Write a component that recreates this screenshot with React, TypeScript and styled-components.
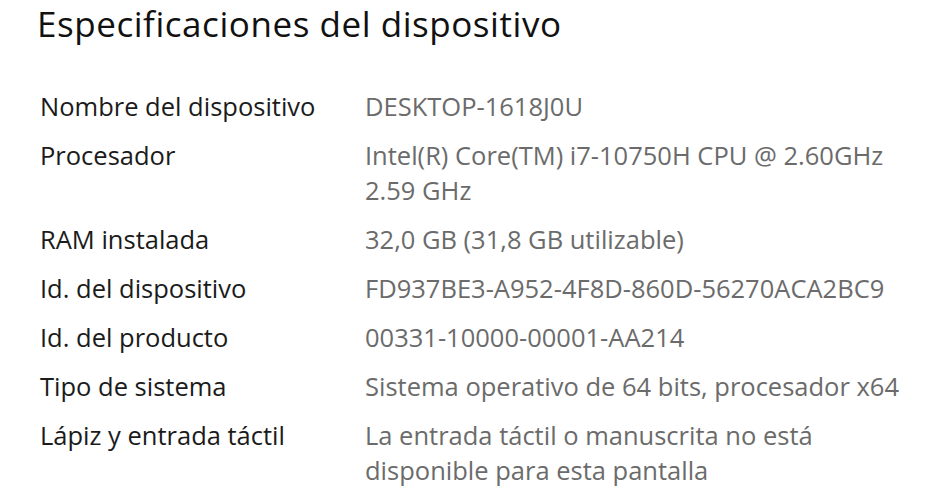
import React from 'react';
import styled, { createGlobalStyle } from 'styled-components';

const GlobalStyle = createGlobalStyle`
  html, body {
    margin: 0;
    background: #ffffff;
  }
`;

const Page = styled.section`
  font-family: "Open Sans", "Liberation Sans", sans-serif;
  padding: 0 0 0 37px;
  width: 948px;
  height: 500px;
  box-sizing: border-box;
  overflow: hidden;
`;

const Title = styled.h1`
  margin: 0;
  font-size: 35px;
  font-weight: 400;
  line-height: 48px;
  letter-spacing: 0.55px;
  color: #111111;
`;

const SpecList = styled.dl`
  display: grid;
  grid-template-columns: 325px 548px;
  row-gap: 14px;
  margin: 41px 0 0 3px;
`;

const Label = styled.dt`
  margin: 0;
  font-size: 25.5px;
  line-height: 35px;
  color: #1b1b1b;
`;

const Value = styled.dd`
  margin: 0;
  font-size: 25.5px;
  line-height: 35px;
  color: #6b6b6b;
`;

const specs: [string, string][] = [
  ['Nombre del dispositivo', 'DESKTOP-1618J0U'],
  ['Procesador', 'Intel(R) Core(TM) i7-10750H CPU @ 2.60GHz 2.59 GHz'],
  ['RAM instalada', '32,0 GB (31,8 GB utilizable)'],
  ['Id. del dispositivo', 'FD937BE3-A952-4F8D-860D-56270ACA2BC9'],
  ['Id. del producto', '00331-10000-00001-AA214'],
  ['Tipo de sistema', 'Sistema operativo de 64 bits, procesador x64'],
  ['Lápiz y entrada táctil', 'La entrada táctil o manuscrita no está disponible para esta pantalla'],
];

function App() {
  return (
    <>
      <GlobalStyle />
      <Page>
        <Title>Especificaciones del dispositivo</Title>
        <SpecList>
          {specs.map(([label, value]) => (
            <React.Fragment key={label}>
              <Label>{label}</Label>
              <Value>{value}</Value>
            </React.Fragment>
          ))}
        </SpecList>
      </Page>
    </>
  );
}

export default App;
